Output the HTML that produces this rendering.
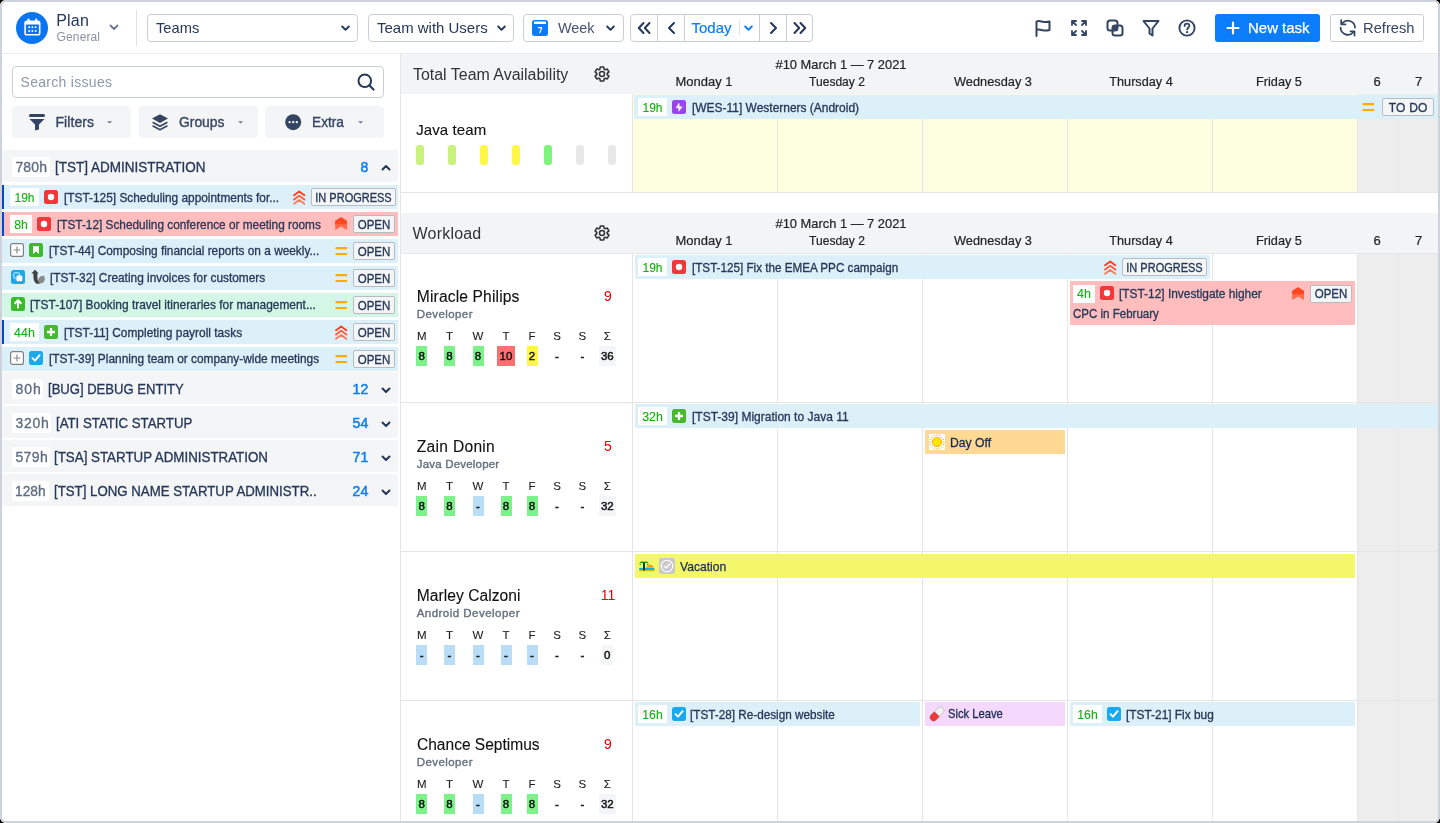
<!DOCTYPE html>
<html><head><meta charset="utf-8"><style>
html,body{margin:0;padding:0;background:#000;width:1440px;height:823px;overflow:hidden}
#app{position:relative;will-change:transform;width:1440px;height:823px;overflow:hidden;border-radius:6px;background:#fff;font-family:"Liberation Sans", sans-serif}
.t{position:absolute;white-space:nowrap;line-height:1}
.r{position:absolute}
</style></head><body><div id="app">
<div class="r" style="left:0px;top:0px;width:1440px;height:53px;background:#fff;"></div>
<div class="r" style="left:0px;top:53px;width:1440px;height:1px;background:#ebecf0;"></div>
<div class="r" style="left:16px;top:12px;width:32px;height:32px;border-radius:50%;background:#0b74f4"></div>
<svg class="r" style="left:24px;top:18.3px;" width="17" height="18" viewBox="0 0 17 18"><rect x="0.3" y="2.6" width="16.2" height="15" rx="2.6" fill="#fff"/><rect x="3.6" y="0.4" width="1.9" height="4" rx=".95" fill="#fff"/><rect x="11.3" y="0.4" width="1.9" height="4" rx=".95" fill="#fff"/><rect x="1.9" y="6.6" width="13" height="9.4" rx="0.6" fill="#0b74f4"/><circle cx="5.2" cy="9.3" r="1" fill="#fff"/><circle cx="5.2" cy="12.9" r="1" fill="#fff"/><circle cx="8.4" cy="9.3" r="1" fill="#fff"/><circle cx="8.4" cy="12.9" r="1" fill="#fff"/><circle cx="11.6" cy="9.3" r="1" fill="#fff"/><circle cx="11.6" cy="12.9" r="1" fill="#fff"/></svg>
<div class="t" style="left:56.2px;top:12.86px;font-size:16px;color:#253858;letter-spacing:0.196px;">Plan</div>
<div class="t" style="left:56.6px;top:31.44px;font-size:12px;color:#8993a4;letter-spacing:0.123px;">General</div>
<svg class="r" style="left:109px;top:24px;" width="10" height="7" viewBox="0 0 10 7"><path d="M1.5 1.5 L5 5 L8.5 1.5" stroke="#6b778c" stroke-width="1.8" fill="none" stroke-linecap="round" stroke-linejoin="round"/></svg>
<div class="r" style="left:136px;top:10px;width:1px;height:36px;background:#dfe1e6;"></div>
<div class="r" style="left:147px;top:14px;width:211px;height:28px;box-sizing:border-box;border:1px solid #c9ced8;border-radius:4px;background:#fff"></div>
<div class="t" style="left:156px;top:20.30px;font-size:15px;color:#253858;transform:scaleX(0.9783);transform-origin:0 0;">Teams</div>
<svg class="r" style="left:341px;top:24.5px;" width="9" height="7" viewBox="0 0 9 7"><path d="M1.2 1.5 L4.5 4.8 L7.8 1.5" stroke="#253858" stroke-width="1.9" fill="none" stroke-linecap="round" stroke-linejoin="round"/></svg>
<div class="r" style="left:368px;top:14px;width:146px;height:28px;box-sizing:border-box;border:1px solid #c9ced8;border-radius:4px;background:#fff"></div>
<div class="t" style="left:377px;top:20.30px;font-size:15px;color:#253858;transform:scaleX(0.9981);transform-origin:0 0;">Team with Users</div>
<svg class="r" style="left:497px;top:24.5px;" width="9" height="7" viewBox="0 0 9 7"><path d="M1.2 1.5 L4.5 4.8 L7.8 1.5" stroke="#253858" stroke-width="1.9" fill="none" stroke-linecap="round" stroke-linejoin="round"/></svg>
<div class="r" style="left:523px;top:14px;width:101px;height:28px;box-sizing:border-box;border:1px solid #c9ced8;border-radius:4px;background:#fff"></div>
<div class="t" style="left:558px;top:20.30px;font-size:15px;color:#42526e;transform:scaleX(0.9587);transform-origin:0 0;">Week</div>
<svg class="r" style="left:606px;top:24.5px;" width="9" height="7" viewBox="0 0 9 7"><path d="M1.2 1.5 L4.5 4.8 L7.8 1.5" stroke="#253858" stroke-width="1.9" fill="none" stroke-linecap="round" stroke-linejoin="round"/></svg>
<svg class="r" style="left:532px;top:19.7px;" width="16" height="16" viewBox="0 0 16 16"><rect x="0" y="0" width="16" height="16" rx="2.5" fill="#0a7cf5"/><rect x="1.8" y="1.6" width="12.4" height="2.5" rx="1.2" fill="#fff"/><path d="M6.3 7.6 H9.8 L7.8 12.6" stroke="#fff" stroke-width="1.2" fill="none" stroke-linecap="round" stroke-linejoin="round"/></svg>
<div class="r" style="left:630px;top:14px;width:183px;height:28px;box-sizing:border-box;border:1px solid #c9ced8;border-radius:4px;background:#fff"></div>
<div class="r" style="left:657px;top:15px;width:1px;height:26px;background:#c9ced8;"></div>
<div class="r" style="left:684px;top:15px;width:1px;height:26px;background:#c9ced8;"></div>
<div class="r" style="left:759px;top:15px;width:1px;height:26px;background:#c9ced8;"></div>
<div class="r" style="left:786px;top:15px;width:1px;height:26px;background:#c9ced8;"></div>
<div class="r" style="left:739px;top:21px;width:1px;height:14px;background:#dfe1e6;"></div>
<svg class="r" style="left:637px;top:21px;" width="14" height="14" viewBox="0 0 14 14"><path d="M6.5 2 L1.8 7 L6.5 12 M12.5 2 L7.8 7 L12.5 12" stroke="#253858" stroke-width="2" fill="none" stroke-linecap="round" stroke-linejoin="round"/></svg>
<svg class="r" style="left:667px;top:21px;" width="9" height="14" viewBox="0 0 9 14"><path d="M7 2 L2 7 L7 12" stroke="#253858" stroke-width="2" fill="none" stroke-linecap="round" stroke-linejoin="round"/></svg>
<div class="t" style="left:691.5px;top:20.30px;font-size:15px;color:#0b7dfa;letter-spacing:0.005px;-webkit-text-stroke:0.2px #0b7dfa;">Today</div>
<svg class="r" style="left:744px;top:24.5px;" width="9" height="7" viewBox="0 0 9 7"><path d="M1.2 1.5 L4.5 4.8 L7.8 1.5" stroke="#0b7dfa" stroke-width="1.9" fill="none" stroke-linecap="round" stroke-linejoin="round"/></svg>
<svg class="r" style="left:769px;top:21px;" width="9" height="14" viewBox="0 0 9 14"><path d="M2 2 L7 7 L2 12" stroke="#253858" stroke-width="2" fill="none" stroke-linecap="round" stroke-linejoin="round"/></svg>
<svg class="r" style="left:793px;top:21px;" width="14" height="14" viewBox="0 0 14 14"><path d="M1.5 2 L6.2 7 L1.5 12 M7.5 2 L12.2 7 L7.5 12" stroke="#253858" stroke-width="2" fill="none" stroke-linecap="round" stroke-linejoin="round"/></svg>
<svg class="r" style="left:1034px;top:19px;" width="18" height="18" viewBox="0 0 18 18"><path d="M2.5 17 V2.5 C6 0.5 9 4.5 15.5 2.5 V11 C9 13 6 9 2.5 11" stroke="#344563" stroke-width="2" fill="none" stroke-linecap="round" stroke-linejoin="round"/></svg>
<svg class="r" style="left:1070px;top:19px;" width="18" height="18" viewBox="0 0 18 18"><path d="M2 6 V2 H6 M2 2 L6 6 M12 2 H16 V6 M16 2 L12 6 M2 12 V16 H6 M2 16 L6 12 M16 12 V16 H12 M16 16 L12 12" stroke="#344563" stroke-width="1.8" fill="none" stroke-linecap="round" stroke-linejoin="round"/></svg>
<svg class="r" style="left:1106px;top:19px;" width="18" height="18" viewBox="0 0 18 18"><rect x="1.5" y="1.5" width="10" height="10" rx="2.5" stroke="#344563" stroke-width="2" fill="none"/><rect x="6.5" y="6.5" width="10" height="10" rx="2.5" stroke="#344563" stroke-width="2" fill="none"/><rect x="6.5" y="6.5" width="5" height="5" fill="#344563"/></svg>
<svg class="r" style="left:1142px;top:19px;" width="18" height="18" viewBox="0 0 18 18"><path d="M1.5 2 H16.5 L10.5 9.5 V16.5 L7.5 14.5 V9.5 Z" stroke="#344563" stroke-width="2" fill="none" stroke-linejoin="round"/></svg>
<svg class="r" style="left:1178px;top:19px;" width="18" height="18" viewBox="0 0 18 18"><circle cx="9" cy="9" r="7.6" stroke="#344563" stroke-width="1.9" fill="none"/><path d="M6.6 7 C6.6 5.2 8 4.6 9 4.6 C10.3 4.6 11.4 5.5 11.4 6.8 C11.4 8.4 9.2 8.6 9.2 10.4" stroke="#344563" stroke-width="1.8" fill="none" stroke-linecap="round"/><circle cx="9.1" cy="13.2" r="1.1" fill="#344563"/></svg>
<div class="r" style="left:1215px;top:14px;width:105px;height:28px;border-radius:3px;background:#0b7dfa"></div>
<svg class="r" style="left:1226px;top:21px;" width="14" height="14" viewBox="0 0 14 14"><path d="M7 1.5 V12.5 M1.5 7 H12.5" stroke="#fff" stroke-width="2.2" stroke-linecap="round"/></svg>
<div class="t" style="left:1247.5px;top:20.30px;font-size:15px;color:#fff;-webkit-text-stroke:0.25px #fff;transform:scaleX(0.9977);transform-origin:0 0;">New task</div>
<div class="r" style="left:1330px;top:14px;width:94px;height:28px;box-sizing:border-box;border:1px solid #c9ced8;border-radius:3px;background:#fff"></div>
<svg class="r" style="left:1334px;top:16px;" width="28" height="24" viewBox="0 0 28 24"><path d="M21 11.6 A7.2 7.2 0 0 0 8.3 7.2 M6.6 11.6 A7.2 7.2 0 0 0 19.3 16.2" stroke="#344563" stroke-width="1.75" fill="none" stroke-linecap="round"/><path d="M7.2 4 V8.3 H11.5 M16.5 15.3 H20.5 V19.5" stroke="#344563" stroke-width="1.75" fill="none" stroke-linecap="round" stroke-linejoin="round"/></svg>
<div class="t" style="left:1362.5px;top:20.30px;font-size:15px;color:#344563;transform:scaleX(0.9809);transform-origin:0 0;">Refresh</div>
<div class="r" style="left:0px;top:54px;width:400px;height:769px;background:#fff;"></div>
<div class="r" style="left:400px;top:54px;width:1px;height:769px;background:#e6e6e7;"></div>
<div class="r" style="left:12px;top:66px;width:372px;height:32px;box-sizing:border-box;border:1px solid #c9ced8;border-radius:4px;background:#fff"></div>
<div class="t" style="left:20.5px;top:75.45px;font-size:14px;color:#8a99ad;letter-spacing:0.295px;">Search issues</div>
<svg class="r" style="left:357px;top:73px;" width="18" height="18" viewBox="0 0 18 18"><circle cx="7.8" cy="7.8" r="6.3" stroke="#253858" stroke-width="2" fill="none"/><path d="M12.5 12.5 L16.5 16.5" stroke="#253858" stroke-width="2.2" stroke-linecap="round"/></svg>
<div class="r" style="left:12px;top:106px;width:119px;height:32px;border-radius:4px;background:#f4f5f7"></div>
<div class="r" style="left:139px;top:106px;width:119px;height:32px;border-radius:4px;background:#f4f5f7"></div>
<div class="r" style="left:265px;top:106px;width:119px;height:32px;border-radius:4px;background:#f4f5f7"></div>
<svg class="r" style="left:28px;top:113px;" width="18" height="18" viewBox="0 0 18 18"><rect x="1" y="1" width="16" height="3" rx="1.5" fill="#344563"/><path d="M1.5 6 H16.5 L11 11.5 V16.5 L7 17.5 V11.5 Z" fill="#344563"/></svg>
<div class="t" style="left:55.5px;top:115.35px;font-size:14px;color:#344563;letter-spacing:0.059px;-webkit-text-stroke:0.35px #344563;">Filters</div>
<svg class="r" style="left:152px;top:113.5px;" width="17" height="17" viewBox="0 0 17 17"><path d="M8 0.3 L16 4.6 L8 8.9 L0 4.6 Z" fill="#344563"/><path d="M0.6 8.3 L8 12.2 L15.4 8.3 M0.6 11.8 L8 15.7 L15.4 11.8" stroke="#344563" stroke-width="1.6" fill="none" stroke-linejoin="round"/></svg>
<div class="t" style="left:178.5px;top:115.35px;font-size:14px;color:#344563;-webkit-text-stroke:0.35px #344563;transform:scaleX(0.9902);transform-origin:0 0;">Groups</div>
<svg class="r" style="left:285px;top:114px;" width="17" height="17" viewBox="0 0 17 17"><circle cx="8.2" cy="8.2" r="8" fill="#344563"/><circle cx="4.6" cy="8.2" r="1.15" fill="#fff"/><circle cx="8.2" cy="8.2" r="1.15" fill="#fff"/><circle cx="11.8" cy="8.2" r="1.15" fill="#fff"/></svg>
<div class="t" style="left:312px;top:115.35px;font-size:14px;color:#344563;-webkit-text-stroke:0.35px #344563;transform:scaleX(0.9777);transform-origin:0 0;">Extra</div>
<svg class="r" style="left:107.4px;top:120.8px;" width="6" height="4" viewBox="0 0 6 4"><path d="M0 0.2 H5.2 L2.6 2.6 Z" fill="#6b778c"/></svg>
<svg class="r" style="left:237.70000000000002px;top:120.8px;" width="6" height="4" viewBox="0 0 6 4"><path d="M0 0.2 H5.2 L2.6 2.6 Z" fill="#6b778c"/></svg>
<svg class="r" style="left:357.79999999999995px;top:120.8px;" width="6" height="4" viewBox="0 0 6 4"><path d="M0 0.2 H5.2 L2.6 2.6 Z" fill="#6b778c"/></svg>
<div class="r" style="left:2px;top:150px;width:396px;height:32px;background:#f4f5f7;"></div>
<div class="r" style="left:12px;top:157px;width:38px;height:20px;background:#fff;border-radius:2px;"></div>
<div class="t" style="left:15.4px;top:160.15px;font-size:14px;color:#5e6c84;letter-spacing:0.141px;-webkit-text-stroke:0.32px #5e6c84;">780h</div>
<div class="t" style="left:54.5px;top:160.15px;font-size:14px;color:#253858;-webkit-text-stroke:0.32px #253858;transform:scaleX(0.9639);transform-origin:0 0;">[TST] ADMINISTRATION</div>
<div class="t" style="left:308.20px;width:60px;text-align:right;top:160.15px;font-size:14px;color:#0c7ff2;-webkit-text-stroke:0.5px #0c7ff2;">8</div>
<svg class="r" style="left:381px;top:164px;" width="10" height="7" viewBox="0 0 10 7"><path d="M1.5 5.5 L5 2 L8.5 5.5" stroke="#253858" stroke-width="2" fill="none" stroke-linecap="round" stroke-linejoin="round"/></svg>
<div class="r" style="left:2px;top:185px;width:396px;height:24px;background:#dcf0f9;"></div>
<div class="r" style="left:2px;top:185px;width:2px;height:24px;background:#0747c9;"></div>
<div class="r" style="left:10px;top:188px;width:29px;height:18px;background:#fff;"></div>
<div class="t" style="left:10.00px;width:29px;text-align:center;top:191.62px;font-size:12.5px;color:#12b012;-webkit-text-stroke:0.12px #12b012;transform:scaleX(0.9608);transform-origin:50% 0;">19h</div>
<svg class="r" style="left:44px;top:190px;" width="14" height="14" viewBox="0 0 14 14"><rect width="14" height="14" rx="2.5" fill="#f3363a"/><circle cx="7" cy="7" r="3.2" fill="#fff"/></svg>
<div class="t" style="left:63.7px;top:191.00px;font-size:13px;color:#253858;-webkit-text-stroke:0.32px #253858;transform:scaleX(0.9131);transform-origin:0 0;">[TST-125] Scheduling appointments for...</div>
<svg class="r" style="left:292.8px;top:189.5px;" width="13" height="15" viewBox="0 0 13 15"><path d="M1 5.3 L6.2 1.5 L11.4 5.3" stroke="#ff3d14" stroke-width="1.8" fill="none" stroke-linecap="round" stroke-linejoin="round"/><path d="M1 9.6 L6.2 5.8 L11.4 9.6" stroke="#ff5a35" stroke-width="1.8" fill="none" stroke-linecap="round" stroke-linejoin="round"/><path d="M1 13.8 L6.2 10 L11.4 13.8" stroke="#ff7a5c" stroke-width="1.8" fill="none" stroke-linecap="round" stroke-linejoin="round"/></svg>
<div class="r" style="left:311px;top:188px;width:85px;height:18px;box-sizing:border-box;border:1px solid #b8bcc2;border-radius:2px;background:#f4f5f7"></div>
<div class="t" style="left:311.00px;width:85px;text-align:center;top:191.74px;font-size:12px;color:#253858;-webkit-text-stroke:0.32px #253858;transform:scaleX(0.9161);transform-origin:50% 0;">IN PROGRESS</div>
<div class="r" style="left:2px;top:212px;width:396px;height:24px;background:#ffbdbd;"></div>
<div class="r" style="left:2px;top:212px;width:2px;height:24px;background:#0747c9;"></div>
<div class="r" style="left:10px;top:215px;width:22px;height:18px;background:#fff;"></div>
<div class="t" style="left:10.00px;width:22px;text-align:center;top:218.62px;font-size:12.5px;color:#12b012;-webkit-text-stroke:0.12px #12b012;transform:scaleX(0.9823);transform-origin:50% 0;">8h</div>
<svg class="r" style="left:37px;top:217px;" width="14" height="14" viewBox="0 0 14 14"><rect width="14" height="14" rx="2.5" fill="#f3363a"/><circle cx="7" cy="7" r="3.2" fill="#fff"/></svg>
<div class="t" style="left:56.7px;top:218.00px;font-size:13px;color:#253858;-webkit-text-stroke:0.32px #253858;transform:scaleX(0.9082);transform-origin:0 0;">[TST-12] Scheduling conference or meeting rooms</div>
<svg class="r" style="left:334.8px;top:217px;" width="13" height="14" viewBox="0 0 13 14"><path d="M0.2 4 L6.1 0.2 L12 4 V13 L6.1 9.6 L0.2 13 Z" fill="#ff6a48"/><path d="M0.2 4 L6.1 0.2 L12 4 V7.2 H0.2 Z" fill="#ff4820"/></svg>
<div class="r" style="left:353px;top:215px;width:42px;height:18px;box-sizing:border-box;border:1px solid #b8bcc2;border-radius:2px;background:#f4f5f7"></div>
<div class="t" style="left:353.00px;width:42px;text-align:center;top:218.74px;font-size:12px;color:#253858;-webkit-text-stroke:0.32px #253858;transform:scaleX(0.9585);transform-origin:50% 0;">OPEN</div>
<div class="r" style="left:2px;top:239px;width:396px;height:24px;background:#dcf0f9;"></div>
<svg class="r" style="left:10px;top:243px;" width="14" height="14" viewBox="0 0 14 14"><rect x=".6" y=".6" width="12.8" height="12.8" rx="2" fill="#fff" stroke="#808080" stroke-width="1.2"/><path d="M7 3.6 V10.4 M3.6 7 H10.4" stroke="#8a8a8a" stroke-width="1.2"/></svg>
<svg class="r" style="left:29px;top:243px;" width="14" height="14" viewBox="0 0 14 14"><rect width="14" height="14" rx="2.5" fill="#3bbb2a"/><path d="M4 3.2 H10 V11 L7 8.6 L4 11 Z" fill="#fff"/></svg>
<div class="t" style="left:48.5px;top:244.00px;font-size:13px;color:#253858;-webkit-text-stroke:0.32px #253858;transform:scaleX(0.9110);transform-origin:0 0;">[TST-44] Composing financial reports on a weekly...</div>
<svg class="r" style="left:334.8px;top:246px;" width="13" height="10" viewBox="0 0 13 10"><rect x="0.3" y="1.1" width="12" height="2.1" rx="1" fill="#ffab00"/><rect x="0.3" y="7" width="12" height="2.1" rx="1" fill="#ffab00"/></svg>
<div class="r" style="left:353px;top:242px;width:42px;height:18px;box-sizing:border-box;border:1px solid #b8bcc2;border-radius:2px;background:#f4f5f7"></div>
<div class="t" style="left:353.00px;width:42px;text-align:center;top:245.74px;font-size:12px;color:#253858;-webkit-text-stroke:0.32px #253858;transform:scaleX(0.9585);transform-origin:50% 0;">OPEN</div>
<div class="r" style="left:2px;top:266px;width:396px;height:24px;background:#dcf0f9;"></div>
<svg class="r" style="left:11px;top:270px;" width="14" height="14" viewBox="0 0 14 14"><rect width="14" height="14" rx="2.5" fill="#1aa9ef"/><rect x="2.8" y="2.8" width="5.5" height="5.5" rx="1.2" stroke="#fff" stroke-width="1.1" fill="none" opacity=".75"/><rect x="5.5" y="5.5" width="5.8" height="5.8" rx="1.2" fill="#fff"/></svg>
<div class="t" style="left:50.3px;top:271.00px;font-size:13px;color:#253858;-webkit-text-stroke:0.32px #253858;transform:scaleX(0.9138);transform-origin:0 0;">[TST-32] Creating invoices for customers</div>
<svg class="r" style="left:334.8px;top:273px;" width="13" height="10" viewBox="0 0 13 10"><rect x="0.3" y="1.1" width="12" height="2.1" rx="1" fill="#ffab00"/><rect x="0.3" y="7" width="12" height="2.1" rx="1" fill="#ffab00"/></svg>
<div class="r" style="left:353px;top:269px;width:42px;height:18px;box-sizing:border-box;border:1px solid #b8bcc2;border-radius:2px;background:#f4f5f7"></div>
<div class="t" style="left:353.00px;width:42px;text-align:center;top:272.74px;font-size:12px;color:#253858;-webkit-text-stroke:0.32px #253858;transform:scaleX(0.9585);transform-origin:50% 0;">OPEN</div>
<svg class="r" style="left:31px;top:268.5px;" width="15" height="16" viewBox="0 0 15 16"><path d="M7.2 14.2 C6.5 11.5 7.5 8.5 9.5 7.2 C10.5 7.6 11.5 7.2 12.8 6.6 C13.8 8 14.2 10 13.4 12 C12.5 14 10 15 7.2 14.2 Z" fill="#8a8a8a"/><path d="M0.3 4.6 L4 0.8 L7.7 4.6 L6.3 4.6 L6.5 10 C6.8 12 7.8 13.5 9.2 14.6 L5.5 14.8 C3.5 13.5 2.6 11 2.5 8.5 L2.3 4.6 Z" fill="#404040"/></svg>
<div class="r" style="left:2px;top:293px;width:396px;height:24px;background:#d3f6e6;"></div>
<svg class="r" style="left:11px;top:297px;" width="14" height="14" viewBox="0 0 14 14"><rect width="14" height="14" rx="2.5" fill="#3bbb2a"/><path d="M7 11.2 V3.5 M3.6 6.8 L7 3.3 L10.4 6.8" stroke="#fff" stroke-width="2" fill="none" stroke-linejoin="round"/></svg>
<div class="t" style="left:30.4px;top:298.00px;font-size:13px;color:#253858;-webkit-text-stroke:0.32px #253858;transform:scaleX(0.9157);transform-origin:0 0;">[TST-107] Booking travel itineraries for management...</div>
<svg class="r" style="left:334.8px;top:300px;" width="13" height="10" viewBox="0 0 13 10"><rect x="0.3" y="1.1" width="12" height="2.1" rx="1" fill="#ffab00"/><rect x="0.3" y="7" width="12" height="2.1" rx="1" fill="#ffab00"/></svg>
<div class="r" style="left:353px;top:296px;width:42px;height:18px;box-sizing:border-box;border:1px solid #b8bcc2;border-radius:2px;background:#f4f5f7"></div>
<div class="t" style="left:353.00px;width:42px;text-align:center;top:299.74px;font-size:12px;color:#253858;-webkit-text-stroke:0.32px #253858;transform:scaleX(0.9585);transform-origin:50% 0;">OPEN</div>
<div class="r" style="left:2px;top:320px;width:396px;height:24px;background:#dcf0f9;"></div>
<div class="r" style="left:2px;top:320px;width:2px;height:24px;background:#0747c9;"></div>
<div class="r" style="left:10px;top:323px;width:29px;height:18px;background:#fff;"></div>
<div class="t" style="left:10.00px;width:29px;text-align:center;text-indent:0.008px;top:326.62px;font-size:12.5px;color:#12b012;letter-spacing:0.008px;-webkit-text-stroke:0.12px #12b012;">44h</div>
<svg class="r" style="left:44px;top:325px;" width="14" height="14" viewBox="0 0 14 14"><rect width="14" height="14" rx="2.5" fill="#47b830"/><path d="M7 3 V11 M3 7 H11" stroke="#fff" stroke-width="2.3"/></svg>
<div class="t" style="left:63.7px;top:326.00px;font-size:13px;color:#253858;-webkit-text-stroke:0.32px #253858;transform:scaleX(0.9176);transform-origin:0 0;">[TST-11] Completing payroll tasks</div>
<svg class="r" style="left:334.8px;top:324.5px;" width="13" height="15" viewBox="0 0 13 15"><path d="M1 5.3 L6.2 1.5 L11.4 5.3" stroke="#ff3d14" stroke-width="1.8" fill="none" stroke-linecap="round" stroke-linejoin="round"/><path d="M1 9.6 L6.2 5.8 L11.4 9.6" stroke="#ff5a35" stroke-width="1.8" fill="none" stroke-linecap="round" stroke-linejoin="round"/><path d="M1 13.8 L6.2 10 L11.4 13.8" stroke="#ff7a5c" stroke-width="1.8" fill="none" stroke-linecap="round" stroke-linejoin="round"/></svg>
<div class="r" style="left:353px;top:323px;width:42px;height:18px;box-sizing:border-box;border:1px solid #b8bcc2;border-radius:2px;background:#f4f5f7"></div>
<div class="t" style="left:353.00px;width:42px;text-align:center;top:326.74px;font-size:12px;color:#253858;-webkit-text-stroke:0.32px #253858;transform:scaleX(0.9585);transform-origin:50% 0;">OPEN</div>
<div class="r" style="left:2px;top:347px;width:396px;height:24px;background:#dcf0f9;"></div>
<svg class="r" style="left:10px;top:351px;" width="14" height="14" viewBox="0 0 14 14"><rect x=".6" y=".6" width="12.8" height="12.8" rx="2" fill="#fff" stroke="#808080" stroke-width="1.2"/><path d="M7 3.6 V10.4 M3.6 7 H10.4" stroke="#8a8a8a" stroke-width="1.2"/></svg>
<svg class="r" style="left:29px;top:351px;" width="14" height="14" viewBox="0 0 14 14"><rect width="14" height="14" rx="2.5" fill="#1aa9ef"/><path d="M3.5 7.2 L6 9.7 L10.6 4.2" stroke="#fff" stroke-width="1.9" fill="none" stroke-linecap="round" stroke-linejoin="round"/></svg>
<div class="t" style="left:48.5px;top:352.00px;font-size:13px;color:#253858;-webkit-text-stroke:0.32px #253858;transform:scaleX(0.9141);transform-origin:0 0;">[TST-39] Planning team or company-wide meetings</div>
<svg class="r" style="left:334.8px;top:354px;" width="13" height="10" viewBox="0 0 13 10"><rect x="0.3" y="1.1" width="12" height="2.1" rx="1" fill="#ffab00"/><rect x="0.3" y="7" width="12" height="2.1" rx="1" fill="#ffab00"/></svg>
<div class="r" style="left:353px;top:350px;width:42px;height:18px;box-sizing:border-box;border:1px solid #b8bcc2;border-radius:2px;background:#f4f5f7"></div>
<div class="t" style="left:353.00px;width:42px;text-align:center;top:353.74px;font-size:12px;color:#253858;-webkit-text-stroke:0.32px #253858;transform:scaleX(0.9585);transform-origin:50% 0;">OPEN</div>
<div class="r" style="left:2px;top:372px;width:396px;height:32px;background:#f4f5f7;"></div>
<div class="r" style="left:12px;top:379px;width:31px;height:20px;background:#fff;border-radius:2px;"></div>
<div class="t" style="left:15.4px;top:382.15px;font-size:14px;color:#5e6c84;letter-spacing:1.010px;-webkit-text-stroke:0.32px #5e6c84;">80h</div>
<div class="t" style="left:48px;top:382.15px;font-size:14px;color:#253858;-webkit-text-stroke:0.32px #253858;transform:scaleX(0.9329);transform-origin:0 0;">[BUG] DEBUG ENTITY</div>
<div class="t" style="left:308.20px;width:60px;text-align:right;top:382.15px;font-size:14px;color:#0c7ff2;-webkit-text-stroke:0.5px #0c7ff2;">12</div>
<svg class="r" style="left:381px;top:387px;" width="10" height="7" viewBox="0 0 10 7"><path d="M1.5 1.5 L5 5 L8.5 1.5" stroke="#253858" stroke-width="2" fill="none" stroke-linecap="round" stroke-linejoin="round"/></svg>
<div class="r" style="left:2px;top:406px;width:396px;height:32px;background:#f4f5f7;"></div>
<div class="r" style="left:12px;top:413px;width:39px;height:20px;background:#fff;border-radius:2px;"></div>
<div class="t" style="left:15.4px;top:416.15px;font-size:14px;color:#5e6c84;letter-spacing:0.775px;-webkit-text-stroke:0.32px #5e6c84;">320h</div>
<div class="t" style="left:55.6px;top:416.15px;font-size:14px;color:#253858;-webkit-text-stroke:0.32px #253858;transform:scaleX(0.9457);transform-origin:0 0;">[ATI STATIC STARTUP</div>
<div class="t" style="left:308.20px;width:60px;text-align:right;top:416.15px;font-size:14px;color:#0c7ff2;-webkit-text-stroke:0.5px #0c7ff2;">54</div>
<svg class="r" style="left:381px;top:421px;" width="10" height="7" viewBox="0 0 10 7"><path d="M1.5 1.5 L5 5 L8.5 1.5" stroke="#253858" stroke-width="2" fill="none" stroke-linecap="round" stroke-linejoin="round"/></svg>
<div class="r" style="left:2px;top:440px;width:396px;height:32px;background:#f4f5f7;"></div>
<div class="r" style="left:12px;top:447px;width:38px;height:20px;background:#fff;border-radius:2px;"></div>
<div class="t" style="left:15.4px;top:450.15px;font-size:14px;color:#5e6c84;letter-spacing:0.408px;-webkit-text-stroke:0.32px #5e6c84;">579h</div>
<div class="t" style="left:54px;top:450.15px;font-size:14px;color:#253858;-webkit-text-stroke:0.32px #253858;transform:scaleX(0.9527);transform-origin:0 0;">[TSA] STARTUP ADMINISTRATION</div>
<div class="t" style="left:308.20px;width:60px;text-align:right;top:450.15px;font-size:14px;color:#0c7ff2;-webkit-text-stroke:0.5px #0c7ff2;">71</div>
<svg class="r" style="left:381px;top:455px;" width="10" height="7" viewBox="0 0 10 7"><path d="M1.5 1.5 L5 5 L8.5 1.5" stroke="#253858" stroke-width="2" fill="none" stroke-linecap="round" stroke-linejoin="round"/></svg>
<div class="r" style="left:2px;top:474px;width:396px;height:32px;background:#f4f5f7;"></div>
<div class="r" style="left:12px;top:481px;width:37px;height:20px;background:#fff;border-radius:2px;"></div>
<div class="t" style="left:15.4px;top:484.15px;font-size:14px;color:#5e6c84;-webkit-text-stroke:0.32px #5e6c84;transform:scaleX(0.9842);transform-origin:0 0;">128h</div>
<div class="t" style="left:53.6px;top:484.15px;font-size:14px;color:#253858;-webkit-text-stroke:0.32px #253858;transform:scaleX(0.9457);transform-origin:0 0;">[TST] LONG NAME STARTUP ADMINISTR..</div>
<div class="t" style="left:308.20px;width:60px;text-align:right;top:484.15px;font-size:14px;color:#0c7ff2;-webkit-text-stroke:0.5px #0c7ff2;">24</div>
<svg class="r" style="left:381px;top:489px;" width="10" height="7" viewBox="0 0 10 7"><path d="M1.5 1.5 L5 5 L8.5 1.5" stroke="#253858" stroke-width="2" fill="none" stroke-linecap="round" stroke-linejoin="round"/></svg>
<div class="r" style="left:401px;top:54px;width:1037px;height:769px;background:#fff;"></div>
<div class="r" style="left:401px;top:54px;width:1037px;height:40px;background:#f3f4f6;"></div>
<div class="t" style="left:412.6px;top:67.36px;font-size:16px;color:#333;transform:scaleX(0.9960);transform-origin:0 0;">Total Team Availability</div>
<svg class="r" style="left:593px;top:65px;" width="18" height="18" viewBox="0 0 18 18"><circle cx="9" cy="9" r="2.5" stroke="#333" stroke-width="1.5" fill="none"/><path d="M6.84 4.16 L7.38 1.98 L10.62 1.98 L11.16 4.16 L11.57 4.55 L12.12 4.71 L14.27 4.09 L15.89 6.89 L14.27 8.45 L14.14 9.00 L14.27 9.55 L15.89 11.11 L14.27 13.91 L12.12 13.29 L11.57 13.45 L11.16 13.84 L10.62 16.02 L7.38 16.02 L6.84 13.84 L6.43 13.45 L5.88 13.29 L3.73 13.91 L2.11 11.11 L3.73 9.55 L3.86 9.00 L3.73 8.45 L2.11 6.89 L3.73 4.09 L5.88 4.71 L6.43 4.55 Z" stroke="#333" stroke-width="1.6" fill="none" stroke-linejoin="round"/></svg>
<div class="t" style="left:691.00px;width:300px;text-align:center;top:58.20px;font-size:13px;color:#222;-webkit-text-stroke:0.2px #222;transform:scaleX(0.9898);transform-origin:50% 0;">#10 March 1 — 7 2021</div>
<div class="t" style="left:633.60px;width:140px;text-align:center;top:75.20px;font-size:13px;color:#222;-webkit-text-stroke:0.2px #222;transform:scaleX(0.9967);transform-origin:50% 0;">Monday 1</div>
<div class="t" style="left:766.80px;width:140px;text-align:center;top:75.20px;font-size:13px;color:#222;-webkit-text-stroke:0.2px #222;transform:scaleX(0.9271);transform-origin:50% 0;">Tuesday 2</div>
<div class="t" style="left:922.50px;width:140px;text-align:center;top:75.20px;font-size:13px;color:#222;-webkit-text-stroke:0.2px #222;transform:scaleX(0.9827);transform-origin:50% 0;">Wednesday 3</div>
<div class="t" style="left:1071.40px;width:140px;text-align:center;top:75.20px;font-size:13px;color:#222;-webkit-text-stroke:0.2px #222;transform:scaleX(0.9745);transform-origin:50% 0;">Thursday 4</div>
<div class="t" style="left:1209.20px;width:140px;text-align:center;top:75.20px;font-size:13px;color:#222;-webkit-text-stroke:0.2px #222;transform:scaleX(0.9770);transform-origin:50% 0;">Friday 5</div>
<div class="t" style="left:1307.20px;width:140px;text-align:center;top:75.20px;font-size:13px;color:#222;-webkit-text-stroke:0.2px #222;">6</div>
<div class="t" style="left:1348.50px;width:140px;text-align:center;top:75.20px;font-size:13px;color:#222;-webkit-text-stroke:0.2px #222;">7</div>
<div class="r" style="left:633px;top:94px;width:724px;height:98px;background:#fefee0;"></div>
<div class="r" style="left:1358px;top:94px;width:80px;height:98px;background:#ededed;"></div>
<div class="r" style="left:632px;top:94px;width:1px;height:98px;background:#e5e5e6;"></div>
<div class="r" style="left:777px;top:94px;width:1px;height:98px;background:#e5e5e6;"></div>
<div class="r" style="left:922px;top:94px;width:1px;height:98px;background:#e5e5e6;"></div>
<div class="r" style="left:1067px;top:94px;width:1px;height:98px;background:#e5e5e6;"></div>
<div class="r" style="left:1212px;top:94px;width:1px;height:98px;background:#e5e5e6;"></div>
<div class="r" style="left:1357px;top:94px;width:1px;height:98px;background:#e5e5e6;"></div>
<div class="r" style="left:1398px;top:94px;width:1px;height:98px;background:#e5e5e6;"></div>
<div class="r" style="left:401px;top:192px;width:1037px;height:1px;background:#e5e5e6;"></div>
<div class="t" style="left:416.2px;top:122.30px;font-size:15px;color:#111;letter-spacing:0.106px;-webkit-text-stroke:0.12px #111;">Java team</div>
<div class="r" style="left:416px;top:145px;width:8px;height:20px;background:#c9f27a;border-radius:3px;"></div>
<div class="r" style="left:448px;top:145px;width:8px;height:20px;background:#c9f27a;border-radius:3px;"></div>
<div class="r" style="left:480px;top:145px;width:8px;height:20px;background:#fff64a;border-radius:3px;"></div>
<div class="r" style="left:512px;top:145px;width:8px;height:20px;background:#fff64a;border-radius:3px;"></div>
<div class="r" style="left:544px;top:145px;width:8px;height:20px;background:#7df57d;border-radius:3px;"></div>
<div class="r" style="left:576px;top:145px;width:8px;height:20px;background:#e8e8e8;border-radius:3px;"></div>
<div class="r" style="left:608px;top:145px;width:8px;height:20px;background:#e8e8e8;border-radius:3px;"></div>
<div class="r" style="left:634px;top:95px;width:804px;height:24px;background:#dcf0f9;border-radius:1px;"></div>
<div class="r" style="left:638px;top:98px;width:29px;height:18px;background:#fff;"></div>
<div class="t" style="left:638.00px;width:29px;text-align:center;top:101.62px;font-size:12.5px;color:#12b012;-webkit-text-stroke:0.12px #12b012;transform:scaleX(0.9608);transform-origin:50% 0;">19h</div>
<svg class="r" style="left:672px;top:100px;" width="14" height="14" viewBox="0 0 14 14"><rect width="14" height="14" rx="2.5" fill="#9a45ea"/><path d="M6.9 3 L4 7.9 H6.5 L6.9 11.3 L10.2 6.7 H7.6 Z" fill="#fff" stroke="#fff" stroke-width=".4" stroke-linejoin="round"/></svg>
<div class="t" style="left:691.7px;top:101.00px;font-size:13px;color:#253858;-webkit-text-stroke:0.32px #253858;transform:scaleX(0.9199);transform-origin:0 0;">[WES-11] Westerners (Android)</div>
<svg class="r" style="left:1361.5px;top:102px;" width="13" height="10" viewBox="0 0 13 10"><rect x="0.3" y="1.1" width="12" height="2.1" rx="1" fill="#ffab00"/><rect x="0.3" y="7" width="12" height="2.1" rx="1" fill="#ffab00"/></svg>
<div class="r" style="left:1382px;top:98px;width:52px;height:18px;box-sizing:border-box;border:1px solid #b8bcc2;border-radius:2px;background:#f4f5f7"></div>
<div class="t" style="left:1382.00px;width:52px;text-align:center;text-indent:0.240px;top:101.74px;font-size:12px;color:#253858;letter-spacing:0.240px;-webkit-text-stroke:0.32px #253858;">TO DO</div>
<div class="r" style="left:401px;top:213px;width:1037px;height:40px;background:#f3f4f6;"></div>
<div class="t" style="left:412.6px;top:226.36px;font-size:16px;color:#333;letter-spacing:0.189px;">Workload</div>
<svg class="r" style="left:593px;top:224px;" width="18" height="18" viewBox="0 0 18 18"><circle cx="9" cy="9" r="2.5" stroke="#333" stroke-width="1.5" fill="none"/><path d="M6.84 4.16 L7.38 1.98 L10.62 1.98 L11.16 4.16 L11.57 4.55 L12.12 4.71 L14.27 4.09 L15.89 6.89 L14.27 8.45 L14.14 9.00 L14.27 9.55 L15.89 11.11 L14.27 13.91 L12.12 13.29 L11.57 13.45 L11.16 13.84 L10.62 16.02 L7.38 16.02 L6.84 13.84 L6.43 13.45 L5.88 13.29 L3.73 13.91 L2.11 11.11 L3.73 9.55 L3.86 9.00 L3.73 8.45 L2.11 6.89 L3.73 4.09 L5.88 4.71 L6.43 4.55 Z" stroke="#333" stroke-width="1.6" fill="none" stroke-linejoin="round"/></svg>
<div class="t" style="left:691.00px;width:300px;text-align:center;top:217.20px;font-size:13px;color:#222;-webkit-text-stroke:0.2px #222;transform:scaleX(0.9898);transform-origin:50% 0;">#10 March 1 — 7 2021</div>
<div class="t" style="left:633.60px;width:140px;text-align:center;top:234.20px;font-size:13px;color:#222;-webkit-text-stroke:0.2px #222;transform:scaleX(0.9967);transform-origin:50% 0;">Monday 1</div>
<div class="t" style="left:766.80px;width:140px;text-align:center;top:234.20px;font-size:13px;color:#222;-webkit-text-stroke:0.2px #222;transform:scaleX(0.9271);transform-origin:50% 0;">Tuesday 2</div>
<div class="t" style="left:922.50px;width:140px;text-align:center;top:234.20px;font-size:13px;color:#222;-webkit-text-stroke:0.2px #222;transform:scaleX(0.9827);transform-origin:50% 0;">Wednesday 3</div>
<div class="t" style="left:1071.40px;width:140px;text-align:center;top:234.20px;font-size:13px;color:#222;-webkit-text-stroke:0.2px #222;transform:scaleX(0.9745);transform-origin:50% 0;">Thursday 4</div>
<div class="t" style="left:1209.20px;width:140px;text-align:center;top:234.20px;font-size:13px;color:#222;-webkit-text-stroke:0.2px #222;transform:scaleX(0.9770);transform-origin:50% 0;">Friday 5</div>
<div class="t" style="left:1307.20px;width:140px;text-align:center;top:234.20px;font-size:13px;color:#222;-webkit-text-stroke:0.2px #222;">6</div>
<div class="t" style="left:1348.50px;width:140px;text-align:center;top:234.20px;font-size:13px;color:#222;-webkit-text-stroke:0.2px #222;">7</div>
<div class="r" style="left:401px;top:253px;width:1037px;height:1px;background:#e5e5e6;"></div>
<div class="r" style="left:1358px;top:254px;width:80px;height:569px;background:#ededed;"></div>
<div class="r" style="left:632px;top:254px;width:1px;height:569px;background:#e5e5e6;"></div>
<div class="r" style="left:777px;top:254px;width:1px;height:569px;background:#e5e5e6;"></div>
<div class="r" style="left:922px;top:254px;width:1px;height:569px;background:#e5e5e6;"></div>
<div class="r" style="left:1067px;top:254px;width:1px;height:569px;background:#e5e5e6;"></div>
<div class="r" style="left:1212px;top:254px;width:1px;height:569px;background:#e5e5e6;"></div>
<div class="r" style="left:1357px;top:254px;width:1px;height:569px;background:#e5e5e6;"></div>
<div class="r" style="left:1398px;top:254px;width:1px;height:569px;background:#e5e5e6;"></div>
<div class="r" style="left:401px;top:402px;width:1037px;height:1px;background:#e5e5e6;"></div>
<div class="r" style="left:401px;top:551px;width:1037px;height:1px;background:#e5e5e6;"></div>
<div class="r" style="left:401px;top:700px;width:1037px;height:1px;background:#e5e5e6;"></div>
<div class="t" style="left:416.8px;top:288.59px;font-size:15.6px;color:#111;letter-spacing:0.147px;-webkit-text-stroke:0.12px #111;">Miracle Philips</div>
<div class="t" style="left:588.00px;width:40px;text-align:center;top:289.35px;font-size:14px;color:#e30000;">9</div>
<div class="t" style="left:416.7px;top:308.97px;font-size:11.5px;color:#66737f;letter-spacing:0.423px;-webkit-text-stroke:0.4px #66737f;">Developer</div>
<div class="t" style="left:406.70px;width:30px;text-align:center;top:330.87px;font-size:11.5px;color:#222;-webkit-text-stroke:0.1px #222;">M</div>
<div class="t" style="left:434.50px;width:30px;text-align:center;top:330.87px;font-size:11.5px;color:#222;-webkit-text-stroke:0.1px #222;">T</div>
<div class="t" style="left:463.00px;width:30px;text-align:center;top:330.87px;font-size:11.5px;color:#222;-webkit-text-stroke:0.1px #222;">W</div>
<div class="t" style="left:491.00px;width:30px;text-align:center;top:330.87px;font-size:11.5px;color:#222;-webkit-text-stroke:0.1px #222;">T</div>
<div class="t" style="left:517.00px;width:30px;text-align:center;top:330.87px;font-size:11.5px;color:#222;-webkit-text-stroke:0.1px #222;">F</div>
<div class="t" style="left:542.00px;width:30px;text-align:center;top:330.87px;font-size:11.5px;color:#222;-webkit-text-stroke:0.1px #222;">S</div>
<div class="t" style="left:567.30px;width:30px;text-align:center;top:330.87px;font-size:11.5px;color:#222;-webkit-text-stroke:0.1px #222;">S</div>
<div class="t" style="left:592.40px;width:30px;text-align:center;top:330.87px;font-size:11.5px;color:#222;-webkit-text-stroke:0.1px #222;">Σ</div>
<div class="r" style="left:416.2px;top:346.1px;width:11px;height:20px;background:#7ef28a;"></div>
<div class="t" style="left:406.70px;width:30px;text-align:center;top:350.77px;font-size:11.5px;color:#111;-webkit-text-stroke:0.45px #111;">8</div>
<div class="r" style="left:444.0px;top:346.1px;width:11px;height:20px;background:#7ef28a;"></div>
<div class="t" style="left:434.50px;width:30px;text-align:center;top:350.77px;font-size:11.5px;color:#111;-webkit-text-stroke:0.45px #111;">8</div>
<div class="r" style="left:472.5px;top:346.1px;width:11px;height:20px;background:#7ef28a;"></div>
<div class="t" style="left:463.00px;width:30px;text-align:center;top:350.77px;font-size:11.5px;color:#111;-webkit-text-stroke:0.45px #111;">8</div>
<div class="r" style="left:497.0px;top:346.1px;width:18px;height:20px;background:#f87171;"></div>
<div class="t" style="left:491.00px;width:30px;text-align:center;top:350.77px;font-size:11.5px;color:#111;-webkit-text-stroke:0.45px #111;">10</div>
<div class="r" style="left:526.5px;top:346.1px;width:11px;height:20px;background:#fff64a;"></div>
<div class="t" style="left:517.00px;width:30px;text-align:center;top:350.77px;font-size:11.5px;color:#111;-webkit-text-stroke:0.45px #111;">2</div>
<div class="t" style="left:542.00px;width:30px;text-align:center;top:350.77px;font-size:11.5px;color:#111;-webkit-text-stroke:0.45px #111;">-</div>
<div class="t" style="left:567.30px;width:30px;text-align:center;top:350.77px;font-size:11.5px;color:#111;-webkit-text-stroke:0.45px #111;">-</div>
<div class="r" style="left:598.8px;top:346.1px;width:17px;height:20px;background:#f4f5f7;"></div>
<div class="t" style="left:592.30px;width:30px;text-align:center;top:350.77px;font-size:11.5px;color:#111;-webkit-text-stroke:0.45px #111;">36</div>
<div class="t" style="left:416.8px;top:438.59px;font-size:15.6px;color:#111;letter-spacing:0.286px;-webkit-text-stroke:0.12px #111;">Zain Donin</div>
<div class="t" style="left:588.00px;width:40px;text-align:center;top:439.35px;font-size:14px;color:#e30000;">5</div>
<div class="t" style="left:416.7px;top:458.97px;font-size:11.5px;color:#66737f;letter-spacing:0.200px;-webkit-text-stroke:0.4px #66737f;">Java Developer</div>
<div class="t" style="left:406.70px;width:30px;text-align:center;top:480.87px;font-size:11.5px;color:#222;-webkit-text-stroke:0.1px #222;">M</div>
<div class="t" style="left:434.50px;width:30px;text-align:center;top:480.87px;font-size:11.5px;color:#222;-webkit-text-stroke:0.1px #222;">T</div>
<div class="t" style="left:463.00px;width:30px;text-align:center;top:480.87px;font-size:11.5px;color:#222;-webkit-text-stroke:0.1px #222;">W</div>
<div class="t" style="left:491.00px;width:30px;text-align:center;top:480.87px;font-size:11.5px;color:#222;-webkit-text-stroke:0.1px #222;">T</div>
<div class="t" style="left:517.00px;width:30px;text-align:center;top:480.87px;font-size:11.5px;color:#222;-webkit-text-stroke:0.1px #222;">F</div>
<div class="t" style="left:542.00px;width:30px;text-align:center;top:480.87px;font-size:11.5px;color:#222;-webkit-text-stroke:0.1px #222;">S</div>
<div class="t" style="left:567.30px;width:30px;text-align:center;top:480.87px;font-size:11.5px;color:#222;-webkit-text-stroke:0.1px #222;">S</div>
<div class="t" style="left:592.40px;width:30px;text-align:center;top:480.87px;font-size:11.5px;color:#222;-webkit-text-stroke:0.1px #222;">Σ</div>
<div class="r" style="left:416.2px;top:496.1px;width:11px;height:20px;background:#7ef28a;"></div>
<div class="t" style="left:406.70px;width:30px;text-align:center;top:500.77px;font-size:11.5px;color:#111;-webkit-text-stroke:0.45px #111;">8</div>
<div class="r" style="left:444.0px;top:496.1px;width:11px;height:20px;background:#7ef28a;"></div>
<div class="t" style="left:434.50px;width:30px;text-align:center;top:500.77px;font-size:11.5px;color:#111;-webkit-text-stroke:0.45px #111;">8</div>
<div class="r" style="left:472.5px;top:496.1px;width:11px;height:20px;background:#b9dcf7;"></div>
<div class="t" style="left:463.00px;width:30px;text-align:center;top:500.77px;font-size:11.5px;color:#111;-webkit-text-stroke:0.45px #111;">-</div>
<div class="r" style="left:500.5px;top:496.1px;width:11px;height:20px;background:#7ef28a;"></div>
<div class="t" style="left:491.00px;width:30px;text-align:center;top:500.77px;font-size:11.5px;color:#111;-webkit-text-stroke:0.45px #111;">8</div>
<div class="r" style="left:526.5px;top:496.1px;width:11px;height:20px;background:#7ef28a;"></div>
<div class="t" style="left:517.00px;width:30px;text-align:center;top:500.77px;font-size:11.5px;color:#111;-webkit-text-stroke:0.45px #111;">8</div>
<div class="t" style="left:542.00px;width:30px;text-align:center;top:500.77px;font-size:11.5px;color:#111;-webkit-text-stroke:0.45px #111;">-</div>
<div class="t" style="left:567.30px;width:30px;text-align:center;top:500.77px;font-size:11.5px;color:#111;-webkit-text-stroke:0.45px #111;">-</div>
<div class="r" style="left:598.8px;top:496.1px;width:17px;height:20px;background:#f4f5f7;"></div>
<div class="t" style="left:592.30px;width:30px;text-align:center;top:500.77px;font-size:11.5px;color:#111;-webkit-text-stroke:0.45px #111;">32</div>
<div class="t" style="left:416.8px;top:587.59px;font-size:15.6px;color:#111;letter-spacing:0.042px;-webkit-text-stroke:0.12px #111;">Marley Calzoni</div>
<div class="t" style="left:588.00px;width:40px;text-align:center;top:588.35px;font-size:14px;color:#e30000;">11</div>
<div class="t" style="left:416.7px;top:607.97px;font-size:11.5px;color:#66737f;letter-spacing:0.471px;-webkit-text-stroke:0.4px #66737f;">Android Developer</div>
<div class="t" style="left:406.70px;width:30px;text-align:center;top:629.87px;font-size:11.5px;color:#222;-webkit-text-stroke:0.1px #222;">M</div>
<div class="t" style="left:434.50px;width:30px;text-align:center;top:629.87px;font-size:11.5px;color:#222;-webkit-text-stroke:0.1px #222;">T</div>
<div class="t" style="left:463.00px;width:30px;text-align:center;top:629.87px;font-size:11.5px;color:#222;-webkit-text-stroke:0.1px #222;">W</div>
<div class="t" style="left:491.00px;width:30px;text-align:center;top:629.87px;font-size:11.5px;color:#222;-webkit-text-stroke:0.1px #222;">T</div>
<div class="t" style="left:517.00px;width:30px;text-align:center;top:629.87px;font-size:11.5px;color:#222;-webkit-text-stroke:0.1px #222;">F</div>
<div class="t" style="left:542.00px;width:30px;text-align:center;top:629.87px;font-size:11.5px;color:#222;-webkit-text-stroke:0.1px #222;">S</div>
<div class="t" style="left:567.30px;width:30px;text-align:center;top:629.87px;font-size:11.5px;color:#222;-webkit-text-stroke:0.1px #222;">S</div>
<div class="t" style="left:592.40px;width:30px;text-align:center;top:629.87px;font-size:11.5px;color:#222;-webkit-text-stroke:0.1px #222;">Σ</div>
<div class="r" style="left:416.2px;top:645.1px;width:11px;height:20px;background:#b9dcf7;"></div>
<div class="t" style="left:406.70px;width:30px;text-align:center;top:649.77px;font-size:11.5px;color:#111;-webkit-text-stroke:0.45px #111;">-</div>
<div class="r" style="left:444.0px;top:645.1px;width:11px;height:20px;background:#b9dcf7;"></div>
<div class="t" style="left:434.50px;width:30px;text-align:center;top:649.77px;font-size:11.5px;color:#111;-webkit-text-stroke:0.45px #111;">-</div>
<div class="r" style="left:472.5px;top:645.1px;width:11px;height:20px;background:#b9dcf7;"></div>
<div class="t" style="left:463.00px;width:30px;text-align:center;top:649.77px;font-size:11.5px;color:#111;-webkit-text-stroke:0.45px #111;">-</div>
<div class="r" style="left:500.5px;top:645.1px;width:11px;height:20px;background:#b9dcf7;"></div>
<div class="t" style="left:491.00px;width:30px;text-align:center;top:649.77px;font-size:11.5px;color:#111;-webkit-text-stroke:0.45px #111;">-</div>
<div class="r" style="left:526.5px;top:645.1px;width:11px;height:20px;background:#b9dcf7;"></div>
<div class="t" style="left:517.00px;width:30px;text-align:center;top:649.77px;font-size:11.5px;color:#111;-webkit-text-stroke:0.45px #111;">-</div>
<div class="t" style="left:542.00px;width:30px;text-align:center;top:649.77px;font-size:11.5px;color:#111;-webkit-text-stroke:0.45px #111;">-</div>
<div class="t" style="left:567.30px;width:30px;text-align:center;top:649.77px;font-size:11.5px;color:#111;-webkit-text-stroke:0.45px #111;">-</div>
<div class="r" style="left:601.8px;top:645.1px;width:11px;height:20px;background:#f4f5f7;"></div>
<div class="t" style="left:592.30px;width:30px;text-align:center;top:649.77px;font-size:11.5px;color:#111;-webkit-text-stroke:0.45px #111;">0</div>
<div class="t" style="left:416.8px;top:736.59px;font-size:15.6px;color:#111;-webkit-text-stroke:0.12px #111;transform:scaleX(0.9959);transform-origin:0 0;">Chance Septimus</div>
<div class="t" style="left:588.00px;width:40px;text-align:center;top:737.35px;font-size:14px;color:#e30000;">9</div>
<div class="t" style="left:416.7px;top:756.97px;font-size:11.5px;color:#66737f;letter-spacing:0.423px;-webkit-text-stroke:0.4px #66737f;">Developer</div>
<div class="t" style="left:406.70px;width:30px;text-align:center;top:778.87px;font-size:11.5px;color:#222;-webkit-text-stroke:0.1px #222;">M</div>
<div class="t" style="left:434.50px;width:30px;text-align:center;top:778.87px;font-size:11.5px;color:#222;-webkit-text-stroke:0.1px #222;">T</div>
<div class="t" style="left:463.00px;width:30px;text-align:center;top:778.87px;font-size:11.5px;color:#222;-webkit-text-stroke:0.1px #222;">W</div>
<div class="t" style="left:491.00px;width:30px;text-align:center;top:778.87px;font-size:11.5px;color:#222;-webkit-text-stroke:0.1px #222;">T</div>
<div class="t" style="left:517.00px;width:30px;text-align:center;top:778.87px;font-size:11.5px;color:#222;-webkit-text-stroke:0.1px #222;">F</div>
<div class="t" style="left:542.00px;width:30px;text-align:center;top:778.87px;font-size:11.5px;color:#222;-webkit-text-stroke:0.1px #222;">S</div>
<div class="t" style="left:567.30px;width:30px;text-align:center;top:778.87px;font-size:11.5px;color:#222;-webkit-text-stroke:0.1px #222;">S</div>
<div class="t" style="left:592.40px;width:30px;text-align:center;top:778.87px;font-size:11.5px;color:#222;-webkit-text-stroke:0.1px #222;">Σ</div>
<div class="r" style="left:416.2px;top:794.1px;width:11px;height:20px;background:#7ef28a;"></div>
<div class="t" style="left:406.70px;width:30px;text-align:center;top:798.77px;font-size:11.5px;color:#111;-webkit-text-stroke:0.45px #111;">8</div>
<div class="r" style="left:444.0px;top:794.1px;width:11px;height:20px;background:#7ef28a;"></div>
<div class="t" style="left:434.50px;width:30px;text-align:center;top:798.77px;font-size:11.5px;color:#111;-webkit-text-stroke:0.45px #111;">8</div>
<div class="r" style="left:472.5px;top:794.1px;width:11px;height:20px;background:#b9dcf7;"></div>
<div class="t" style="left:463.00px;width:30px;text-align:center;top:798.77px;font-size:11.5px;color:#111;-webkit-text-stroke:0.45px #111;">-</div>
<div class="r" style="left:500.5px;top:794.1px;width:11px;height:20px;background:#7ef28a;"></div>
<div class="t" style="left:491.00px;width:30px;text-align:center;top:798.77px;font-size:11.5px;color:#111;-webkit-text-stroke:0.45px #111;">8</div>
<div class="r" style="left:526.5px;top:794.1px;width:11px;height:20px;background:#7ef28a;"></div>
<div class="t" style="left:517.00px;width:30px;text-align:center;top:798.77px;font-size:11.5px;color:#111;-webkit-text-stroke:0.45px #111;">8</div>
<div class="t" style="left:542.00px;width:30px;text-align:center;top:798.77px;font-size:11.5px;color:#111;-webkit-text-stroke:0.45px #111;">-</div>
<div class="t" style="left:567.30px;width:30px;text-align:center;top:798.77px;font-size:11.5px;color:#111;-webkit-text-stroke:0.45px #111;">-</div>
<div class="r" style="left:598.8px;top:794.1px;width:17px;height:20px;background:#f4f5f7;"></div>
<div class="t" style="left:592.30px;width:30px;text-align:center;top:798.77px;font-size:11.5px;color:#111;-webkit-text-stroke:0.45px #111;">32</div>
<div class="r" style="left:635px;top:255px;width:575px;height:24px;background:#dcf0f9;border-radius:1px;"></div>
<div class="r" style="left:638px;top:258px;width:29px;height:18px;background:#fff;"></div>
<div class="t" style="left:638.00px;width:29px;text-align:center;top:261.62px;font-size:12.5px;color:#12b012;-webkit-text-stroke:0.12px #12b012;transform:scaleX(0.9608);transform-origin:50% 0;">19h</div>
<svg class="r" style="left:672px;top:260px;" width="14" height="14" viewBox="0 0 14 14"><rect width="14" height="14" rx="2.5" fill="#f3363a"/><circle cx="7" cy="7" r="3.2" fill="#fff"/></svg>
<div class="t" style="left:691.7px;top:261.00px;font-size:13px;color:#253858;-webkit-text-stroke:0.32px #253858;transform:scaleX(0.8971);transform-origin:0 0;">[TST-125] Fix the EMEA PPC campaign</div>
<svg class="r" style="left:1103.8px;top:259.5px;" width="13" height="15" viewBox="0 0 13 15"><path d="M1 5.3 L6.2 1.5 L11.4 5.3" stroke="#ff3d14" stroke-width="1.8" fill="none" stroke-linecap="round" stroke-linejoin="round"/><path d="M1 9.6 L6.2 5.8 L11.4 9.6" stroke="#ff5a35" stroke-width="1.8" fill="none" stroke-linecap="round" stroke-linejoin="round"/><path d="M1 13.8 L6.2 10 L11.4 13.8" stroke="#ff7a5c" stroke-width="1.8" fill="none" stroke-linecap="round" stroke-linejoin="round"/></svg>
<div class="r" style="left:1122px;top:258px;width:85px;height:18px;box-sizing:border-box;border:1px solid #b8bcc2;border-radius:2px;background:#f4f5f7"></div>
<div class="t" style="left:1122.00px;width:85px;text-align:center;top:261.74px;font-size:12px;color:#253858;-webkit-text-stroke:0.32px #253858;transform:scaleX(0.9161);transform-origin:50% 0;">IN PROGRESS</div>
<div class="r" style="left:1070px;top:281px;width:285px;height:44px;background:#ffbdbd;border-radius:1px;"></div>
<div class="r" style="left:1073px;top:284.5px;width:22px;height:18px;background:#fff;"></div>
<div class="t" style="left:1073.00px;width:22px;text-align:center;top:288.12px;font-size:12.5px;color:#12b012;-webkit-text-stroke:0.12px #12b012;transform:scaleX(0.9976);transform-origin:50% 0;">4h</div>
<svg class="r" style="left:1100px;top:286px;" width="14" height="14" viewBox="0 0 14 14"><rect width="14" height="14" rx="2.5" fill="#f3363a"/><circle cx="7" cy="7" r="3.2" fill="#fff"/></svg>
<div class="t" style="left:1119px;top:287.00px;font-size:13px;color:#253858;-webkit-text-stroke:0.32px #253858;transform:scaleX(0.9150);transform-origin:0 0;">[TST-12] Investigate higher</div>
<div class="t" style="left:1073px;top:306.50px;font-size:13px;color:#253858;-webkit-text-stroke:0.32px #253858;transform:scaleX(0.8863);transform-origin:0 0;">CPC in February</div>
<svg class="r" style="left:1291.8px;top:287px;" width="13" height="14" viewBox="0 0 13 14"><path d="M0.2 4 L6.1 0.2 L12 4 V13 L6.1 9.6 L0.2 13 Z" fill="#ff6a48"/><path d="M0.2 4 L6.1 0.2 L12 4 V7.2 H0.2 Z" fill="#ff4820"/></svg>
<div class="r" style="left:1310px;top:284.5px;width:42px;height:18px;box-sizing:border-box;border:1px solid #b8bcc2;border-radius:2px;background:#f4f5f7"></div>
<div class="t" style="left:1310.00px;width:42px;text-align:center;top:288.24px;font-size:12px;color:#253858;-webkit-text-stroke:0.32px #253858;transform:scaleX(0.9585);transform-origin:50% 0;">OPEN</div>
<div class="r" style="left:635px;top:404px;width:803px;height:24px;background:#dcf0f9;border-radius:1px;"></div>
<div class="r" style="left:638px;top:407px;width:29px;height:18px;background:#fff;"></div>
<div class="t" style="left:638.00px;width:29px;text-align:center;top:410.62px;font-size:12.5px;color:#12b012;-webkit-text-stroke:0.12px #12b012;transform:scaleX(0.9908);transform-origin:50% 0;">32h</div>
<svg class="r" style="left:672px;top:409px;" width="14" height="14" viewBox="0 0 14 14"><rect width="14" height="14" rx="2.5" fill="#47b830"/><path d="M7 3 V11 M3 7 H11" stroke="#fff" stroke-width="2.3"/></svg>
<div class="t" style="left:691.7px;top:410.00px;font-size:13px;color:#253858;-webkit-text-stroke:0.32px #253858;transform:scaleX(0.9238);transform-origin:0 0;">[TST-39] Migration to Java 11</div>
<div class="r" style="left:925px;top:430px;width:140px;height:24px;background:#ffd894;border-radius:1px;"></div>
<svg class="r" style="left:929px;top:434px;" width="16" height="16" viewBox="0 0 16 16"><rect width="16" height="16" fill="#fff"/><circle cx="8" cy="8" r="4.5" fill="#ffe800" stroke="#fca60a" stroke-width="1"/><line x1="13.90" y1="8.00" x2="15.50" y2="8.00" stroke="#f2a626" stroke-width="0.9"/><line x1="13.45" y1="10.26" x2="14.93" y2="10.87" stroke="#f2a626" stroke-width="0.9"/><line x1="12.17" y1="12.17" x2="13.30" y2="13.30" stroke="#f2a626" stroke-width="0.9"/><line x1="10.26" y1="13.45" x2="10.87" y2="14.93" stroke="#f2a626" stroke-width="0.9"/><line x1="8.00" y1="13.90" x2="8.00" y2="15.50" stroke="#f2a626" stroke-width="0.9"/><line x1="5.74" y1="13.45" x2="5.13" y2="14.93" stroke="#f2a626" stroke-width="0.9"/><line x1="3.83" y1="12.17" x2="2.70" y2="13.30" stroke="#f2a626" stroke-width="0.9"/><line x1="2.55" y1="10.26" x2="1.07" y2="10.87" stroke="#f2a626" stroke-width="0.9"/><line x1="2.10" y1="8.00" x2="0.50" y2="8.00" stroke="#f2a626" stroke-width="0.9"/><line x1="2.55" y1="5.74" x2="1.07" y2="5.13" stroke="#f2a626" stroke-width="0.9"/><line x1="3.83" y1="3.83" x2="2.70" y2="2.70" stroke="#f2a626" stroke-width="0.9"/><line x1="5.74" y1="2.55" x2="5.13" y2="1.07" stroke="#f2a626" stroke-width="0.9"/><line x1="8.00" y1="2.10" x2="8.00" y2="0.50" stroke="#f2a626" stroke-width="0.9"/><line x1="10.26" y1="2.55" x2="10.87" y2="1.07" stroke="#f2a626" stroke-width="0.9"/><line x1="12.17" y1="3.83" x2="13.30" y2="2.70" stroke="#f2a626" stroke-width="0.9"/><line x1="13.45" y1="5.74" x2="14.93" y2="5.13" stroke="#f2a626" stroke-width="0.9"/></svg>
<div class="t" style="left:949.7px;top:435.70px;font-size:13px;color:#172b4d;-webkit-text-stroke:0.3px #172b4d;transform:scaleX(0.9387);transform-origin:0 0;">Day Off</div>
<div class="r" style="left:635px;top:554px;width:720px;height:24px;background:#f5f76b;border-radius:1px;"></div>
<svg class="r" style="left:638.5px;top:560px;" width="17" height="12" viewBox="0 0 17 12"><path d="M7.3 8 C8 5.5 9.5 4.6 11 4.6 C12.5 4.6 14 5.5 14.6 8 Z" fill="#fa9e12"/><rect x="8" y="7" width="6" height="1.2" fill="#e8c21a"/><rect x="0.2" y="7.9" width="15.2" height="2.1" fill="#1aa6f0"/><rect x="0.2" y="10" width="15.2" height="1.3" fill="#d8c418"/><path d="M5 10.5 V2.4" stroke="#123d12" stroke-width="2"/><path d="M0.2 3.6 C1 1.6 3 1 5 2 C7 1 9 1.6 9.8 3.6 C8.6 3 7 2.7 5 2.9 C3 2.7 1.4 3 0.2 3.6 Z" fill="#137a13"/><circle cx="1.3" cy="4.6" r=".7" fill="#16a016"/><circle cx="8.6" cy="4.6" r=".7" fill="#16a016"/></svg>
<svg class="r" style="left:659px;top:558px;" width="16" height="16" viewBox="0 0 16 16"><rect width="16" height="16" rx="3" fill="#c8c8c8"/><circle cx="8" cy="8" r="5.8" fill="none" stroke="#fff" stroke-width="1.1"/><path d="M5.2 8.2 L7.2 10 L10.8 6" stroke="#fff" stroke-width="1.4" fill="none" stroke-linecap="round"/></svg>
<div class="t" style="left:680px;top:559.70px;font-size:13px;color:#172b4d;-webkit-text-stroke:0.25px #172b4d;transform:scaleX(0.9317);transform-origin:0 0;">Vacation</div>
<div class="r" style="left:635px;top:702px;width:285px;height:24px;background:#dcf0f9;border-radius:1px;"></div>
<div class="r" style="left:638px;top:705px;width:29px;height:18px;background:#fff;"></div>
<div class="t" style="left:638.00px;width:29px;text-align:center;top:708.62px;font-size:12.5px;color:#12b012;-webkit-text-stroke:0.12px #12b012;transform:scaleX(0.9758);transform-origin:50% 0;">16h</div>
<svg class="r" style="left:672px;top:707px;" width="14" height="14" viewBox="0 0 14 14"><rect width="14" height="14" rx="2.5" fill="#1aa9ef"/><path d="M3.5 7.2 L6 9.7 L10.6 4.2" stroke="#fff" stroke-width="1.9" fill="none" stroke-linecap="round" stroke-linejoin="round"/></svg>
<div class="t" style="left:690px;top:708.00px;font-size:13px;color:#253858;-webkit-text-stroke:0.32px #253858;transform:scaleX(0.9028);transform-origin:0 0;">[TST-28] Re-design website</div>
<div class="r" style="left:925px;top:702px;width:140px;height:24px;background:#f4d9fc;border-radius:1px;"></div>
<svg class="r" style="left:927.5px;top:704.5px;" width="18" height="18" viewBox="0 0 18 18"><g transform="rotate(45 9 9)"><rect x="5.4" y="0.6" width="7.2" height="16.8" rx="3.6" fill="#f2f2f2" stroke="#b5b5b5" stroke-width=".7"/><path d="M5.4 9 H12.6 V13.8 A3.6 3.6 0 0 1 5.4 13.8 Z" fill="#ea3b3b"/></g></svg>
<div class="t" style="left:948px;top:707.00px;font-size:13px;color:#172b4d;-webkit-text-stroke:0.3px #172b4d;transform:scaleX(0.8615);transform-origin:0 0;">Sick Leave</div>
<div class="r" style="left:1070px;top:702px;width:285px;height:24px;background:#dcf0f9;border-radius:1px;"></div>
<div class="r" style="left:1073px;top:705px;width:29px;height:18px;background:#fff;"></div>
<div class="t" style="left:1073.00px;width:29px;text-align:center;top:708.62px;font-size:12.5px;color:#12b012;-webkit-text-stroke:0.12px #12b012;transform:scaleX(0.9758);transform-origin:50% 0;">16h</div>
<svg class="r" style="left:1107px;top:707px;" width="14" height="14" viewBox="0 0 14 14"><rect width="14" height="14" rx="2.5" fill="#1aa9ef"/><path d="M3.5 7.2 L6 9.7 L10.6 4.2" stroke="#fff" stroke-width="1.9" fill="none" stroke-linecap="round" stroke-linejoin="round"/></svg>
<div class="t" style="left:1126px;top:708.00px;font-size:13px;color:#253858;-webkit-text-stroke:0.32px #253858;transform:scaleX(0.9140);transform-origin:0 0;">[TST-21] Fix bug</div>
<div class="r" style="left:0;top:0;width:1440px;height:823px;box-sizing:border-box;border:2px solid #cdd2db;border-radius:6px;box-shadow:0 0 0 6px #000;z-index:99"></div>
</div></body></html>
